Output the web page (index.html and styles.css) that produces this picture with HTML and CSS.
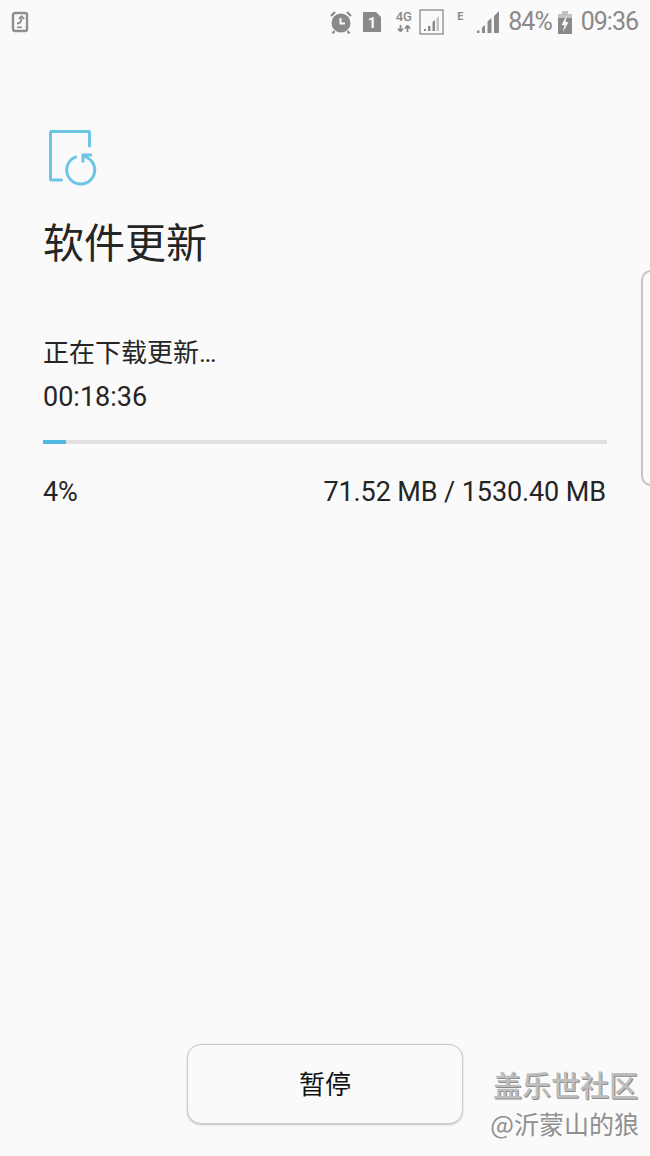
FILE: index.html
```html
<!DOCTYPE html>
<html lang="zh-CN">
<head>
<meta charset="utf-8">
<title>软件更新</title>
<link rel="stylesheet" href="styles.css">
</head>
<body>
<div class="screen">
  <header class="status">
    <svg class="ic-left" width="18" height="22" viewBox="0 0 18 22"><rect x="2" y="2" width="14" height="18" rx="2" fill="none" stroke="#8f8f8f" stroke-width="2.4"/><path d="M6 12.500c3 0 4.500-1.500 4.500-5M8 8l2.700-2.700L13.200 8" fill="none" stroke="#8f8f8f" stroke-width="1.800"/><rect x="6" y="15.500" width="5" height="1.600" fill="#8f8f8f"/></svg>
    <div class="status-right">
      <svg class="ic" width="22" height="24" viewBox="0 0 22 24"><circle cx="11" cy="13" r="9.500" fill="#8a8a8a"/><path d="M10.500 8v5.500h4.500" fill="none" stroke="#fafafa" stroke-width="2"/><path d="M1 6l4-4M21 6l-4-4M4.500 21l-2 2.500M17.500 21l2 2.500" stroke="#8a8a8a" stroke-width="2.200"/></svg>
      <svg class="ic sim" width="20" height="20" viewBox="0 0 20 20"><path d="M1 0h13l5 5v15H1z" fill="#8a8a8a"/><text class="sim-num" x="10" y="15.500" text-anchor="middle">1</text></svg>
      <span class="net"><span class="net-label">4G</span><svg width="14" height="7" viewBox="0 0 14 7"><path d="M3.500 0v6M1 3.500l2.500 3 2.500-3M10.500 7V1M8 3.500l2.500-3 2.500 3" fill="none" stroke="#8a8a8a" stroke-width="1.800"/></svg></span>
      <svg class="ic box" width="25" height="26" viewBox="0 0 25 26"><rect x="1" y="1" width="23" height="24" fill="#fafafa" stroke="#999" stroke-width="1.500"/><path d="M5 20h2v2H5zM9 17h2.500v5H9zM13.500 13l2.500-2v11h-2.500z" fill="#8a8a8a"/><path d="M17.500 9.500l2.500-2.500v15h-2.500z" fill="#c4c4c4"/></svg>
      <span class="edge">E</span>
      <svg class="ic bars" width="22" height="22" viewBox="0 0 22 22"><path d="M0 19.500h2.500V22H0zM5 16.500l3-2.500v8H5zM10.500 10.500l4-3.500v15h-4zM17 5l5-5v22h-5z" fill="#8a8a8a"/></svg>
      <span class="pct">84%</span>
      <svg class="ic batt" width="14" height="23" viewBox="0 0 14 23"><rect x="4" y="0" width="6" height="3" fill="#c2c2c2"/><rect x="0" y="3" width="14" height="4" fill="#c2c2c2"/><rect x="0" y="7" width="14" height="16" fill="#8a8a8a"/><path d="M9 4L3.500 14h3L5 21l5.500-10H7.500z" fill="#fafafa"/></svg>
      <span class="clock">09:36</span>
    </div>
  </header>

  <main class="content">
    <svg class="hero" width="50" height="56" viewBox="0 0 50 56"><path d="M12.500 50H2.500a1 1 0 0 1-1-1V2.500a1 1 0 0 1 1-1h37a1 1 0 0 1 1 1V16" fill="none" stroke="#6cc5e6" stroke-width="3" stroke-linecap="round"/><path d="M27.700 26.600A14 14 0 1 0 38 27.500L34.500 25" fill="none" stroke="#6cc5e6" stroke-width="3"/><path d="M43 25H34V32.500" fill="none" stroke="#6cc5e6" stroke-width="3"/></svg>
    <h1 class="title">软件更新</h1>
    <p class="state">正在下载更新…</p>
    <p class="time">00:18:36</p>
    <div class="track"><div class="fill" style="width:4%"></div></div>
    <div class="meta"><span>4%</span><span>71.52 MB / 1530.40 MB</span></div>
  </main>

  <footer class="foot"><button class="pause" type="button">暂停</button></footer>

  <div class="handle"></div>
  <div class="mark">
    <div class="mark-a">盖乐世社区</div>
    <div class="mark-b">@沂蒙山的狼</div>
  </div>
</div>
</body>
</html>
```

FILE: styles.css
```css
* { box-sizing: border-box; }
html, body { margin: 0; padding: 0; }
body { background: #fafafa; font-family: Roboto, "Noto Sans CJK SC", sans-serif; }
.screen { position: relative; width: 650px; height: 1156px; overflow: hidden; display: flex; flex-direction: column; background: #fafafa; color: #252525; }

.status { height: 44px; flex: none; display: flex; justify-content: space-between; align-items: center; padding: 0 12px 0 11px; color: #8a8a8a; }
.status-right { display: flex; align-items: center; }
.ic { display: block; flex: none; }
.sim { margin-left: 10px; }
.sim-num { font-size: 15px; font-weight: 700; fill: #fafafa; font-family: Roboto, sans-serif; }
.net { display: flex; flex-direction: column; align-items: center; margin-left: 13px; width: 17px; gap: 3px; }
.net-label { font-size: 13px; line-height: 10px; font-weight: 500; }
.box { margin-left: 7px; }
.edge { width: 8px; margin-left: 13px; font-size: 11px; font-weight: 700; line-height: 10px; align-self: flex-start; margin-top: 12px; }
.bars { margin-left: 12px; }
.pct { margin-left: 9px; font-size: 25px; line-height: 44px; letter-spacing: -1px; }
.batt { margin-left: 6px; }
.clock { margin-left: 9px; font-size: 25px; line-height: 44px; letter-spacing: -1px; }

.content { flex: 1; padding: 86px 43px 0 43px; }
.hero { display: block; margin-left: 6px; }
.title { margin: 28px 0 0 0; font-size: 41px; line-height: 60px; font-weight: 400; color: #252525; }
.state { margin: 61px 0 0 0; font-size: 26px; line-height: 36px; }
.time { margin: 8px 0 0 0; font-size: 27px; line-height: 36px; }
.track { margin-top: 25px; height: 4px; background: #e3e1df; }
.fill { height: 100%; background: #4fb9e3; }
.meta { display: flex; justify-content: space-between; margin: 30px 1px 0 0; font-size: 27px; line-height: 36px; letter-spacing: -.1px; }

.foot { flex: none; display: flex; justify-content: center; padding-bottom: 32px; }
.pause { width: 276px; height: 80px; border: 1px solid #c9c9c9; border-radius: 14px; background: #fafafa; box-shadow: 0 1px 2px rgba(0,0,0,.22); font-family: "Noto Sans CJK SC", sans-serif; font-size: 26px; color: #111; padding: 0 0 4px; }

.handle { position: absolute; left: 641px; top: 270px; width: 20px; height: 216px; border: 2px solid #c4c4c4; border-radius: 12px; }
.mark { position: absolute; right: 11px; top: 1067px; text-align: right; font-family: "Noto Sans CJK SC", sans-serif; color: #9a9a9a; }
.mark-a { font-size: 29px; line-height: 34px; font-weight: 500; color: #bdbdbd; text-shadow: 1px 1px 0 #8c8c8c; margin-right: 1px; }
.mark-b { font-size: 25px; line-height: 36px; margin-top: 4px; color: #8f8f8f; }
```
